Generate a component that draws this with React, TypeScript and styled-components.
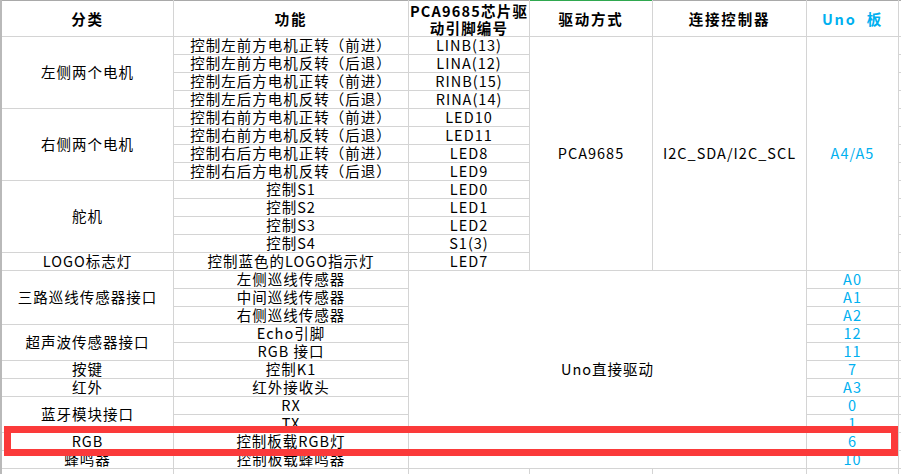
import React from 'react';
import styled, { createGlobalStyle } from 'styled-components';

const Global = createGlobalStyle`
  html, body { margin: 0; padding: 0; background: #fff; overflow: hidden; }
  body { font-family: "Noto Sans CJK SC", "Noto Sans", sans-serif; }
`;

const Page = styled.div`
  position: relative;
  width: 901px;
  height: 474px;
  overflow: hidden;
`;

const Sheet = styled.div`
  display: grid;
  grid-template-columns: 171px 234px 120px 122px 153px 91px 1fr;
  grid-template-rows: 36px repeat(25, 17px);
  gap: 1px;
  width: 901px;
  box-sizing: border-box;
  border-left: 2px solid #b9b9b9;
  background: #d4d4d4;
`;

const Cell = styled.div<{ $col: string; $row: string; $blue?: boolean }>`
  grid-column: ${(p) => p.$col};
  grid-row: ${(p) => p.$row};
  background: #fff;
  display: flex;
  align-items: center;
  justify-content: center;
  text-align: center;
  white-space: pre;
  font-size: 14.5px;
  letter-spacing: 1px;
  line-height: 1;
  color: ${(p) => (p.$blue ? '#00b0f0' : '#000')};
`;

const HeaderCell = styled.div<{ $col: number; $blue?: boolean; $active?: boolean }>`
  grid-column: ${(p) => p.$col};
  grid-row: 1;
  box-sizing: border-box;
  border-top: 1px solid ${(p) => (p.$active ? '#2fa84f' : '#a9a9a9')};
  background: #fff;
  display: flex;
  flex-direction: column;
  align-items: center;
  justify-content: center;
  white-space: pre;
  font-size: 14.5px;
  font-weight: 700;
  letter-spacing: 1.8px;
  line-height: 18px;
  color: ${(p) => (p.$blue ? '#00b0f0' : '#000')};
`;

const HeadLine = styled.span`
  display: block;
  height: 17px;
  line-height: 17px;
  letter-spacing: 1.2px;
`;

const Highlight = styled.div`
  position: absolute;
  left: 4px;
  top: 426px;
  width: 894px;
  height: 30px;
  box-sizing: border-box;
  border: 7px solid #fb3a3a;
  pointer-events: none;
`;

type Span = [string, number, number];

const categories: Span[] = [
  ['左侧两个电机', 1, 4],
  ['右侧两个电机', 5, 4],
  ['舵机', 9, 4],
  ['LOGO标志灯', 13, 1],
  ['三路巡线传感器接口', 14, 3],
  ['超声波传感器接口', 17, 2],
  ['按键', 19, 1],
  ['红外', 20, 1],
  ['蓝牙模块接口', 21, 2],
  ['RGB', 23, 1],
  ['蜂鸣器', 24, 1],
  ['', 25, 1],
];

const functions = [
  '控制左前方电机正转（前进）',
  '控制左前方电机反转（后退）',
  '控制左后方电机正转（前进）',
  '控制左后方电机反转（后退）',
  '控制右前方电机正转（前进）',
  '控制右前方电机反转（后退）',
  '控制右后方电机正转（前进）',
  '控制右后方电机反转（后退）',
  '控制S1',
  '控制S2',
  '控制S3',
  '控制S4',
  '控制蓝色的LOGO指示灯',
  '左侧巡线传感器',
  '中间巡线传感器',
  '右侧巡线传感器',
  'Echo引脚',
  'RGB 接口',
  '控制K1',
  '红外接收头',
  'RX',
  'TX',
  '控制板载RGB灯',
  '控制板载蜂鸣器',
  '',
];

const pcaPins = [
  'LINB(13)',
  'LINA(12)',
  'RINB(15)',
  'RINA(14)',
  'LED10',
  'LED11',
  'LED8',
  'LED9',
  'LED0',
  'LED1',
  'LED2',
  'S1(3)',
  'LED7',
];

const unoPins = ['A0', 'A1', 'A2', '12', '11', '7', 'A3', '0', '1', '6', '10', ''];

const r = (start: number, span = 1) => `${start + 1} / span ${span}`;

export default function App() {
  return (
    <Page>
      <Global />
      <Sheet>
        <HeaderCell $col={1}>分类</HeaderCell>
        <HeaderCell $col={2}>功能</HeaderCell>
        <HeaderCell $col={3}>
          <HeadLine>PCA9685芯片驱</HeadLine>
          <HeadLine>动引脚编号</HeadLine>
        </HeaderCell>
        <HeaderCell $col={4} $active>驱动方式</HeaderCell>
        <HeaderCell $col={5}>连接控制器</HeaderCell>
        <HeaderCell $col={6} $blue>Uno  板</HeaderCell>
        <HeaderCell $col={7} />

        {categories.map(([label, start, span]) => (
          <Cell key={`c${start}`} $col="1" $row={r(start, span)}>
            {label}
          </Cell>
        ))}

        {functions.map((f, i) => (
          <Cell key={`f${i}`} $col="2" $row={r(i + 1)}>
            {f}
          </Cell>
        ))}

        {pcaPins.map((p, i) => (
          <Cell key={`p${i}`} $col="3" $row={r(i + 1)}>
            {p}
          </Cell>
        ))}
        <Cell $col="4" $row={r(1, 13)}>PCA9685</Cell>
        <Cell $col="5" $row={r(1, 13)}>I2C_SDA/I2C_SCL</Cell>
        <Cell $col="6" $row={r(1, 13)} $blue>A4/A5</Cell>

        <Cell $col="3 / span 3" $row={r(14, 11)}>Uno直接驱动</Cell>
        <Cell $col="3" $row={r(25)} />
        <Cell $col="4" $row={r(25)} />
        <Cell $col="5" $row={r(25)} />

        {unoPins.map((p, i) => (
          <Cell key={`u${i}`} $col="6" $row={r(i + 14)} $blue>
            {p}
          </Cell>
        ))}

        {Array.from({ length: 25 }, (_, i) => (
          <Cell key={`e${i}`} $col="7" $row={r(i + 1)} />
        ))}
      </Sheet>
      <Highlight />
    </Page>
  );
}
